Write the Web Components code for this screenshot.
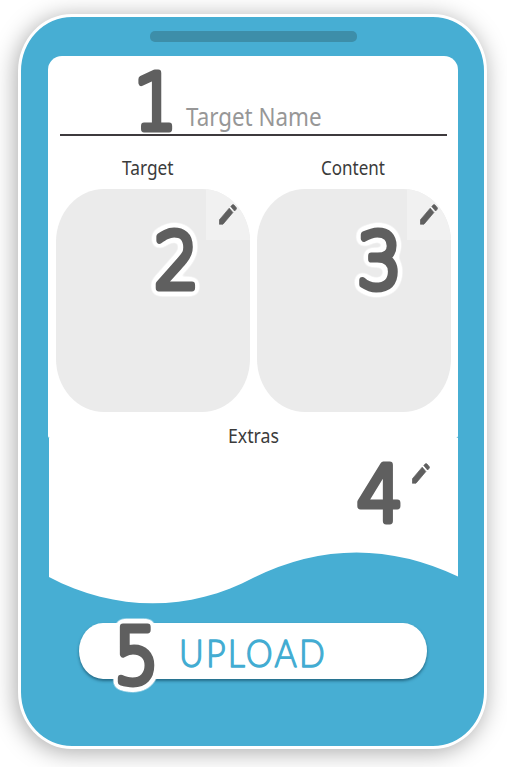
<!DOCTYPE html>
<html lang="en"><head><meta charset="utf-8"><title>Upload target</title>
<style>
html,body{margin:0;width:507px;height:767px;overflow:hidden;background:#fff;font-family:"Noto Sans",sans-serif}
</style></head><body>
<upload-app></upload-app>
<script>
// A line of text set to an exact width: attributes text, width, height, size, weight.
class FitText extends HTMLElement{
  connectedCallback(){
    const a=n=>this.getAttribute(n);
    this.attachShadow({mode:'open'}).innerHTML=`<style>:host{display:block;width:${a('width')}px;height:${a('height')}px}
    svg{display:block;overflow:visible}text{fill:currentColor;stroke:currentColor;stroke-width:${a('stroke')||0};stroke-linejoin:round;letter-spacing:${a('spacing')||0}px;font:${a('weight')||400} ${a('size')}px ${a('font')||'"Noto Sans"'},sans-serif}</style>
    <svg width="${a('width')}" height="${a('height')}"><text x="0" y="${a('base')}" textLength="${a('width')}" lengthAdjust="spacingAndGlyphs">${a('text')}</text></svg>`;
  }
}
customElements.define('fit-text',FitText);

// Step number with a soft-cornered face and a white halo.
class StepNumber extends HTMLElement{
  connectedCallback(){
    const n=this.getAttribute('value'),w=+this.getAttribute('width')||45,halo=!this.hasAttribute('plain');
    this.attachShadow({mode:'open'}).innerHTML=`<style>:host{position:absolute;width:${w}px;height:64px}
    svg{display:block;overflow:visible}text{font:200 76px "DejaVu Sans",sans-serif;fill:#5f5f5f;stroke:#5f5f5f;stroke-width:6.8;stroke-linejoin:round}</style>
    <svg width="${w}" height="64"><filter id="halo" x="-20" y="-20" width="${w+40}" height="110" filterUnits="userSpaceOnUse" color-interpolation-filters="sRGB">
    <feGaussianBlur in="SourceAlpha" stdDeviation="3"/><feComponentTransfer><feFuncA type="linear" slope="16" intercept="-.5"/></feComponentTransfer>
    <feColorMatrix values="0 0 0 0 1 0 0 0 0 1 0 0 0 0 1 0 0 0 1 0"/><feMerge><feMergeNode/><feMergeNode in="SourceGraphic"/></feMerge></filter>
    <text x="0" y="60" ${halo?'filter="url(#halo)"':''} textLength="${w}" lengthAdjust="spacingAndGlyphs">${n}</text></svg>`;
  }
}
customElements.define('step-number',StepNumber);

class EditIcon extends HTMLElement{
  constructor(){super();this.attachShadow({mode:'open'}).innerHTML=`<style>:host{display:block;width:18px;height:21px}svg{display:block}</style>
  <svg width="18" height="21" viewBox="0 0 18 21"><path fill="#5f5f5f" stroke="#5f5f5f" stroke-width=".7" stroke-linejoin="round" d="M.3 15.900 10.200 4.200 13.900 8.500 4 20.200H.3zM11.800 2.500 13.2 .9Q14.1 .1 15 1L17.300 3.700Q17.900 4.400 17.200 5.200L15.600 7z"/></svg>`}
}
customElements.define('edit-icon',EditIcon);

class MediaCard extends HTMLElement{
  constructor(){super();this.attachShadow({mode:'open'}).innerHTML=`<style>
  :host{position:relative;display:block;width:193.5px;height:223px}
  .box{display:flex;justify-content:flex-end;width:100%;height:100%;background:#ebebeb;border-radius:48px/53px;overflow:hidden}
  .edit{box-sizing:border-box;width:43.5px;height:51px;padding:15px 0 0 13px;background:#f1f1f1}</style>
  <div class="box"><div class="edit"><edit-icon></edit-icon></div></div><slot></slot>`}
}
customElements.define('media-card',MediaCard);

class UploadButton extends HTMLElement{
  constructor(){super();this.attachShadow({mode:'open'}).innerHTML=`<style>
  :host{position:relative;display:block;box-sizing:border-box;width:348px;height:56px;padding:10px 0 0 100px;border-radius:24px/28px;background:#fff;box-shadow:0 2px 3px rgba(0,40,60,.5);color:#42acd2}</style><slot></slot>`}
}
customElements.define('upload-button',UploadButton);

class PhoneFrame extends HTMLElement{
  constructor(){super();this.attachShadow({mode:'open'}).innerHTML=`<style>
  :host{display:flex;flex-direction:column;align-items:center;box-sizing:border-box;width:469px;height:735px;border:3px solid #fff;border-radius:54px/57px;background:#47aed3;box-shadow:-2px 3px 23px rgba(0,0,0,.34)}
  .speaker{width:207px;height:11px;margin:14px 0 14px 2px;border-radius:5px;background:#3d8ea9}</style>
  <div class="speaker"></div><slot></slot>`}
}
customElements.define('phone-frame',PhoneFrame);

class UploadApp extends HTMLElement{
  constructor(){super();this.attachShadow({mode:'open'}).innerHTML=`<style>
  :host{display:block;padding:14px 0 0 18px;color:#3b3b3b}
  .screen{position:relative;z-index:1;width:410px;height:382px;margin-left:1px;background:#fff;border-radius:14px 14px 2px 2px;display:flex;flex-direction:column}
  .screen>*{flex:none}
  .name{box-sizing:border-box;width:387px;height:80px;margin-left:12px;padding:44px 0 0 126px;border-bottom:2px solid #3e3a3d;color:#979797}
  .labels{display:flex;height:53px;box-sizing:border-box;padding:20px 0 0 74px;gap:147px}
  .cards{display:flex;gap:7.5px;margin-left:8px}
  .extras{height:14px;margin:12px 0 0 180px}
  .lower{position:relative;width:409px;height:166px;margin-left:2px;flex:none}
  .lower svg{display:block}
  .pen{position:absolute;left:363px;top:25px}
  upload-button{margin:19px 0 0 1px}
  </style>
  <phone-frame>
    <div class="screen">
      <div class="name"><fit-text text="Target Name" width="135.500" height="30" base="25.500" size="26"></fit-text></div>
      <div class="labels"><fit-text text="Target" width="51.500" height="24" base="19" size="19.500"></fit-text><fit-text text="Content" width="64" height="24" base="19" size="19.500"></fit-text></div>
      <div class="cards">
        <media-card><step-number value="2" style="left:98px;top:39px"></step-number></media-card>
        <media-card><step-number value="3" style="left:100px;top:39px"></step-number></media-card>
      </div>
      <div class="extras"><fit-text text="Extras" width="51" height="14" base="19" size="19.500"></fit-text></div>
      <step-number plain value="1" width="43" style="left:86px;top:13px"></step-number>
    </div>
    <div class="lower">
      <svg width="409" height="166"><path fill="#fff" d="M0 0H409V138.500Q306 90 205 139.500C141 174 66 174 0 139z"/></svg>
      <edit-icon class="pen"></edit-icon>
      <step-number plain value="4" width="46" style="left:308px;top:23px"></step-number>
    </div>
    <upload-button><fit-text text="UPLOAD" width="148" height="40" base="33.500" size="38" spacing="2.5" font="Lato" weight="300" stroke="1.3"></fit-text><step-number value="5" style="left:35px;top:0"></step-number></upload-button>
  </phone-frame>`}
}
customElements.define('upload-app',UploadApp);
</script></body></html>
